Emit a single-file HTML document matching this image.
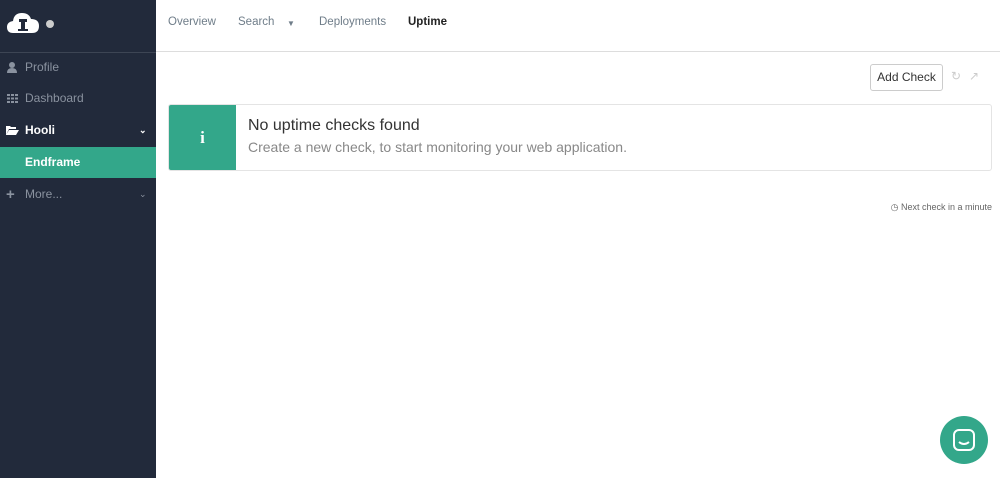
<!DOCTYPE html>
<html><head><style>
body{margin:0;width:1000px;height:478px;overflow:hidden;font-family:"Liberation Sans",sans-serif;background:#fff;position:relative}
.sb{position:absolute;left:0;top:0;width:156px;height:478px;background:#222a3b}
.sb .top{height:52px;border-bottom:1px solid #3d4554}
.item{position:absolute;left:0;width:156px;height:31px;line-height:31px;font-size:12px;color:#8a929f}
.item .t{position:absolute;left:25px}
.nav{position:absolute;left:156px;top:0;right:0;height:51px;border-bottom:1px solid #ddd}
.nav span{position:absolute;top:16px;font-size:11.5px;color:#6f7d89}
</style></head><body>
<div class="sb"><div class="top"></div>
<svg style="position:absolute;left:6px;top:11px" width="34" height="24" viewBox="0 0 34 24"><path d="M7 22 Q1 22 1 16 Q1 11 7 10 Q8 2 16 2 Q23 2 25 8 Q33 8 33 15 Q33 22 26 22Z" fill="#fff"/><path d="M13 8h8v3h-2v7h3v2h-10v-2h3v-7h-2z" fill="#222a3b"/></svg>
<div style="position:absolute;left:46px;top:20px;width:8px;height:8px;border-radius:50%;background:#ccc"></div>
<div class="item" style="top:52px"><svg style="position:absolute;left:7px;top:10px" width="10" height="11"><circle cx="5" cy="3" r="3" fill="#8a929f"/><path d="M0 11 Q0 6 5 6 Q10 6 10 11Z" fill="#8a929f"/></svg><span class="t">Profile</span></div>
<div class="item" style="top:83px"><svg style="position:absolute;left:7px;top:11px" width="11" height="9"><g fill="#8a929f"><rect x="0" y="0" width="3" height="2"/><rect x="4" y="0" width="3" height="2"/><rect x="8" y="0" width="3" height="2"/><rect x="0" y="3.5" width="3" height="2"/><rect x="4" y="3.5" width="3" height="2"/><rect x="8" y="3.5" width="3" height="2"/><rect x="0" y="7" width="3" height="2"/><rect x="4" y="7" width="3" height="2"/><rect x="8" y="7" width="3" height="2"/></g></svg><span class="t">Dashboard</span></div>
<div class="item" style="top:115px;color:#fff;font-weight:bold"><svg style="position:absolute;left:6px;top:11px" width="13" height="9"><path d="M0 0h4l1 1h5v2H3L0 9z M3 4h10l-3 5H0z" fill="#fff"/></svg><span class="t">Hooli</span><span style="position:absolute;left:139px;font-size:9px">&#8964;</span></div>
<div class="item" style="top:147px;background:#33a78a;color:#fff;font-weight:bold"><span class="t">Endframe</span></div>
<div class="item" style="top:179px"><span style="position:absolute;left:6px;font-size:15px;font-weight:bold">+</span><span class="t">More...</span><span style="position:absolute;left:139px;font-size:9px">&#8964;</span></div>
</div>
<div class="nav">
<span style="left:12px">Overview</span><span style="left:82px">Search</span><span style="left:131px;font-size:8px;top:19px">&#9660;</span><span style="left:163px">Deployments</span><span style="left:252px;color:#222;font-weight:bold">Uptime</span>
</div>
<div style="position:absolute;left:870px;top:64px;width:71px;height:25px;border:1px solid #ccc;border-radius:3px;font-size:12px;line-height:25px;text-align:center;color:#333">Add Check</div>
<span style="position:absolute;left:951px;top:69px;color:#ccc;font-size:12px">&#8635;</span>
<span style="position:absolute;left:969px;top:69px;color:#ccc;font-size:12px">&#8599;</span>
<div style="position:absolute;left:168px;top:104px;width:822px;height:65px;border:1px solid #e4e4e4;border-radius:3px;overflow:hidden">
<div style="position:absolute;left:0;top:0;width:67px;height:66px;background:#33a78a;color:#fff;font-weight:bold;font-size:17px;text-align:center;line-height:66px;font-family:'Liberation Serif',serif">i</div>
<div style="position:absolute;left:79px;top:12px;font-size:16px;color:#333">No uptime checks found</div>
<div style="position:absolute;left:79px;top:34px;font-size:14px;color:#888">Create a new check, to start monitoring your web application.</div>
</div>
<div style="position:absolute;right:8px;top:202px;font-size:9px;color:#666">&#9719; Next check in a minute</div>
<div style="position:absolute;left:940px;top:416px;width:48px;height:48px;border-radius:50%;background:#33a78a"><svg style="position:absolute;left:13px;top:13px" width="22" height="22"><rect x="1" y="1" width="20" height="20" rx="5" fill="none" stroke="#fff" stroke-width="2"/><path d="M6 13 Q11 17 16 13" stroke="#fff" stroke-width="2" fill="none"/></svg></div>
</body></html>
